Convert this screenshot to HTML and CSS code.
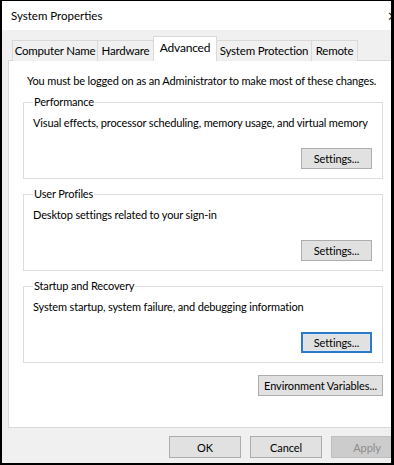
FILE: index.html
```html
<!DOCTYPE html>
<html lang="en">
<head>
  <meta charset="UTF-8">
  <title>System Properties</title>
  <link rel="stylesheet" href="styles.css">
</head>
<body>
  <div class="frame">
    <div class="window">
      <div class="title-bar">
        <span class="title">System Properties</span>
        <span class="close">&#x2715;</span>
      </div>

      <div class="tabs">
        <div class="tab">Computer Name</div>
        <div class="tab">Hardware</div>
        <div class="tab active">Advanced</div>
        <div class="tab">System Protection</div>
        <div class="tab">Remote</div>
      </div>

      <div class="panel">
        <p class="notice">You must be logged on as an Administrator to make most of these changes.</p>

        <fieldset class="group">
          <legend>Performance</legend>
          <p class="group-text">Visual effects, processor scheduling, memory usage, and virtual memory</p>
          <div class="group-actions">
            <button class="btn">Settings...</button>
          </div>
        </fieldset>

        <fieldset class="group">
          <legend>User Profiles</legend>
          <p class="group-text">Desktop settings related to your sign-in</p>
          <div class="group-actions">
            <button class="btn">Settings...</button>
          </div>
        </fieldset>

        <fieldset class="group">
          <legend>Startup and Recovery</legend>
          <p class="group-text">System startup, system failure, and debugging information</p>
          <div class="group-actions">
            <button class="btn focused">Settings...</button>
          </div>
        </fieldset>

        <div class="env-row">
          <button class="btn btn-env">Environment Variables...</button>
        </div>
      </div>

      <div class="dialog-buttons">
        <button class="btn btn-dialog">OK</button>
        <button class="btn btn-dialog">Cancel</button>
        <button class="btn btn-dialog" disabled>Apply</button>
      </div>
    </div>
  </div>
</body>
</html>
```

FILE: styles.css
```css
* {
  box-sizing: border-box;
  margin: 0;
  padding: 0;
}

body {
  background-color: #000;
  font-family: "Lato", "Noto Sans", sans-serif;
  font-size: 11px;
  letter-spacing: -0.15px;
  color: #000;
  width: 394px;
  height: 465px;
  overflow: hidden;
  white-space: nowrap;
}

.frame {
  margin: 1px 3px 2px 2px;
  width: 389px;
  height: 462px;
  overflow: hidden;
  background-color: #f0f0f0;
}

.window {
  width: 410px;
}

.title-bar {
  display: flex;
  justify-content: space-between;
  align-items: center;
  height: 29px;
  padding: 0 14px 0 9px;
  background-color: #fff;
  font-size: 11.5px;
  letter-spacing: 0;
}

.close {
  font-size: 13px;
  color: #333;
}

.tabs {
  display: flex;
  align-items: flex-end;
  height: 30px;
  padding-left: 10px;
  position: relative;
  z-index: 1;
}

.tab {
  height: 21px;
  line-height: 20px;
  text-align: center;
  border: 1px solid #d9d9d9;
  border-bottom: none;
  border-right: none;
  background-color: #f0f0f0;
  margin-bottom: -1px;
  font-size: 11.5px;
  letter-spacing: -0.2px;
}

.tab:nth-child(1) { width: 85px; }
.tab:nth-child(2) { width: 56px; }
.tab:nth-child(4) { width: 95px; }
.tab:nth-child(5) { width: 47px; border-right: 1px solid #d9d9d9; }

.tab.active {
  width: 64px;
  height: 25px;
  line-height: 21px;
  background-color: #fff;
  border-right: 1px solid #d9d9d9;
  margin-right: -1px;
  font-size: 12px;
}

.panel {
  margin-left: 6px;
  width: 390px;
  height: 368px;
  background-color: #fff;
  border: 1px solid #d9d9d9;
  padding: 12px 14px 0 14px;
}

.notice {
  padding-left: 4px;
  line-height: 16px;
  margin-bottom: 6px;
}

.group {
  border: 1px solid #dcdcdc;
  height: 84px;
  margin-bottom: 8px;
  padding: 0 10px 0 9px;
}

.group legend {
  padding: 0 1px;
  line-height: 14px;
}

.group-text {
  margin-top: 6px;
  line-height: 16px;
}

.group-actions {
  display: flex;
  justify-content: flex-end;
  margin-top: 17px;
}

.btn {
  font-family: inherit;
  font-size: 11px;
  letter-spacing: -0.1px;
  color: #000;
  background-color: #e1e1e1;
  border: 1px solid #adadad;
  height: 21px;
  width: 71px;
  padding: 0;
}

.btn.focused {
  border: 2px solid #2c79c7;
  box-shadow: inset 0 0 0 1px #dbe8f5;
}

.env-row {
  display: flex;
  justify-content: flex-end;
  margin-top: 12px;
}

.btn-env {
  width: 125px;
  height: 21px;
}

.dialog-buttons {
  display: flex;
  gap: 9px;
  padding-left: 167px;
  margin-top: 8px;
}

.btn-dialog {
  width: 72px;
  height: 22px;
}

.btn-dialog:disabled {
  background-color: #cccccc;
  border-color: #bfbfbf;
  color: #8d8d8d;
}
```
